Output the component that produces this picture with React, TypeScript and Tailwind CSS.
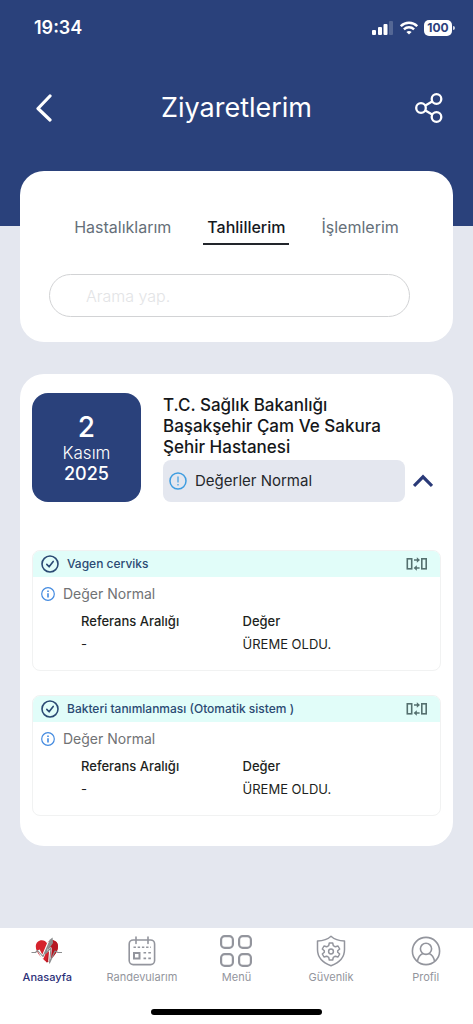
import type { ReactNode } from "react";

const results = [
  { name: "Vagen cerviks", status: "Değer Normal", range: "-", value: "ÜREME OLDU." },
  {
    name: "Bakteri tanımlanması (Otomatik sistem )",
    status: "Değer Normal",
    range: "-",
    value: "ÜREME OLDU.",
  },
];

const tabs = ["Hastalıklarım", "Tahlillerim", "İşlemlerim"];

function StatusBar() {
  return (
    <div className="flex h-14 items-center justify-between pr-[18px] pl-[34px]">
      <span className="text-lg font-semibold">19:34</span>
      <div className="flex items-center gap-1.5">
        <svg width="22" height="14" viewBox="0 0 22 14" fill="currentColor">
          <rect x="0" y="9" width="4" height="5" rx="1" />
          <rect x="6" y="6" width="4" height="8" rx="1" />
          <rect x="11.5" y="3" width="4" height="11" rx="1" />
          <rect x="17" y="0" width="4" height="14" rx="1" opacity="0.2" />
        </svg>
        <svg width="18" height="14" viewBox="0 0 18 14" fill="none" stroke="currentColor" strokeWidth="2.4">
          <path d="M0.8 5.2C5.4 0.6 12.6 0.6 17.2 5.2" />
          <path d="M3.9 8.4C6.8 5.6 11.2 5.6 14.1 8.4" />
          <path d="M9 13.6L6.4 11C7.8 9.7 10.2 9.7 11.6 11Z" fill="currentColor" stroke="none" />
        </svg>
        <div className="flex items-center gap-px">
          <span className="flex h-4 w-7 items-center justify-center rounded-[5px] bg-white text-xs font-bold text-[#2a417b]">
            100
          </span>
          <span className="h-1 w-0.5 rounded-r-full bg-white/80" />
        </div>
      </div>
    </div>
  );
}

function Header() {
  return (
    <header className="h-[226px] bg-[#2a417b] text-white">
      <StatusBar />
      <div className="flex h-[104px] items-center justify-between px-7">
        <button type="button" aria-label="Geri" className="flex size-8 items-center justify-center">
          <svg width="18" height="28" viewBox="0 0 18 28" fill="none" stroke="currentColor" strokeWidth="3.2" strokeLinecap="round" strokeLinejoin="round">
            <path d="M15 2L3 14.5L15 26" />
          </svg>
        </button>
        <h1 className="text-[27px]">Ziyaretlerim</h1>
        <button type="button" aria-label="Paylaş" className="flex size-8 items-center justify-center">
          <svg width="28" height="30" viewBox="0 0 28 30" fill="none" stroke="currentColor" strokeWidth="2.3">
            <circle cx="6" cy="15" r="4.8" />
            <circle cx="21.5" cy="6" r="4.8" />
            <circle cx="21.5" cy="24" r="4.8" />
            <path d="M10 12.7L17.5 8.3M10 17.3L17.5 21.7" />
          </svg>
        </button>
      </div>
    </header>
  );
}

function SearchCard() {
  return (
    <section className="-mt-[55px] rounded-3xl bg-white px-[29px] pt-10 pb-[25px]">
      <nav className="flex justify-center gap-7">
        {tabs.map((tab) => (
          <button
            key={tab}
            type="button"
            className={
              tab === "Tahlillerim"
                ? "h-[34px] border-b-2 border-[#22252b] px-1 text-base font-medium text-[#15181d]"
                : "h-[34px] border-b-2 border-transparent px-1 text-base text-[#656f79]"
            }
          >
            {tab}
          </button>
        ))}
      </nav>
      <input
        type="search"
        aria-label="Arama yap"
        placeholder="Arama yap."
        className="mt-[29px] block h-[43px] w-[calc(100%-14px)] rounded-full border border-[#d2d3d5] px-9 text-base font-light placeholder:text-[#e3e4e6]"
      />
    </section>
  );
}

function CompareIcon() {
  return (
    <svg width="22" height="14" viewBox="0 0 22 14" fill="none" stroke="#55706f" strokeWidth="1.6">
      <rect x="1.3" y="1.8" width="4.4" height="10" />
      <rect x="15.8" y="1.8" width="4.4" height="10" />
      <path d="M8 3H11.5" />
      <path d="M10.8 0.2L14 3L10.8 5.8Z" fill="#55706f" stroke="none" />
      <path d="M13.6 11H10" />
      <path d="M10.8 8.2L7.6 11L10.8 13.8Z" fill="#55706f" stroke="none" />
    </svg>
  );
}

function ResultItem({ name, status, range, value }: (typeof results)[number]) {
  return (
    <article className="h-[121px] overflow-hidden rounded-lg border border-[#f1f2f2]">
      <div className="flex h-[26px] items-center bg-[#e1fdf9] pr-3 pl-2 text-[#2b4a73]">
        <svg width="18" height="18" viewBox="0 0 18 18" fill="none" stroke="currentColor" strokeWidth="1.6" strokeLinecap="round" strokeLinejoin="round">
          <circle cx="9" cy="9" r="8" />
          <path d="M5.8 9.4L8.1 11.8L12.2 6.4" />
        </svg>
        <h3 className="ml-2 flex-1 text-xs font-medium">{name}</h3>
        <button type="button" aria-label="Karşılaştır">
          <CompareIcon />
        </button>
      </div>
      <div className="mt-[5px] flex h-6 items-center gap-2 pl-2 text-sm text-[#707274]">
        <svg width="14" height="14" viewBox="0 0 14 14" fill="none" stroke="#438ae0" strokeWidth="1.2">
          <circle cx="7" cy="7" r="6.3" />
          <path d="M7 6.2V10.4M7 3.4V4.9" strokeWidth="1.6" />
        </svg>
        {status}
      </div>
      <table className="ml-12 w-[calc(100%-48px)] table-fixed text-left text-[13px] leading-4 text-[#1d1f21]">
        <thead>
          <tr className="h-[30px]">
            <th className="w-[45%] font-medium">Referans Aralığı</th>
            <th className="font-medium">Değer</th>
          </tr>
        </thead>
        <tbody>
          <tr>
            <td>{range}</td>
            <td>{value}</td>
          </tr>
        </tbody>
      </table>
    </article>
  );
}

function VisitCard() {
  return (
    <section className="mt-8 rounded-3xl bg-white px-3 pt-[19px] pb-[30px]">
      <div className="flex items-start gap-[22px]">
        <time
          dateTime="2025-11-02"
          className="flex size-[109px] shrink-0 flex-col items-center justify-center rounded-2xl bg-[#2a417b] text-white"
        >
          <span className="text-[28px] leading-8 font-medium">2</span>
          <span className="text-[17px] leading-5 font-light">Kasım</span>
          <span className="text-lg leading-[22px] font-medium">2025</span>
        </time>
        <div className="flex-1">
          <h2 className="pt-0.5 text-[17px] leading-[21px] font-medium text-[#15171a]">
            T.C. Sağlık Bakanlığı
            <br />
            Başakşehir Çam Ve Sakura
            <br />
            Şehir Hastanesi
          </h2>
          <div className="mt-0.5 flex items-center gap-2 pr-2">
            <div className="flex h-[42px] flex-1 items-center gap-2 rounded-lg bg-[#e4e7ef] pl-1.5 text-[15px] text-[#24272c]">
              <svg width="18" height="18" viewBox="0 0 18 18" fill="none" stroke="#3f9de0" strokeWidth="1.5">
                <circle cx="9" cy="9" r="8" />
                <path d="M9 4.6V10.4M9 12V13.4" strokeWidth="1.2" />
              </svg>
              Değerler Normal
            </div>
            <button type="button" aria-label="Kapat" className="text-[#2a3a78]">
              <svg width="20" height="14" viewBox="0 0 20 14" fill="none" stroke="currentColor" strokeWidth="3.2">
                <path d="M1 12L10 2.8L19 12" />
              </svg>
            </button>
          </div>
        </div>
      </div>
      <div className="mt-12 flex flex-col gap-6">
        {results.map((result) => (
          <ResultItem key={result.name} {...result} />
        ))}
      </div>
    </section>
  );
}

function HeartIcon() {
  return (
    <svg width="32" height="28" viewBox="0 0 32 28" fill="none">
      <path d="M16 25.5C10.5 21 4.8 15.5 4.8 9.6C4.8 5.6 7.6 3.2 10.8 3.2C13.2 3.2 14.8 4.4 16 6.2C17.2 4.4 18.8 3.2 21.2 3.2C24.4 3.2 27 5.6 27 9.6C27 15.5 21.5 21 16 25.5Z" fill="#d5232d" />
      <path d="M27 9.6C27 15.5 21.5 21 16 25.5L15.2 24.8L20.5 3.3C24.3 3.2 27 5.4 27 9.6Z" fill="#b51722" />
      <path d="M7.5 13L11.5 20.5L17.5 6L14.5 15L19.5 11.5L18.5 24" stroke="#fff" strokeWidth="2.6" strokeLinejoin="round" />
      <path d="M0.5 15.5H4.5L6.5 13.5L12 19.5L18.5 5L14.5 16.5L20 11L18.5 26L24 14L27 15.5H31" stroke="#8b8d8e" strokeWidth="1.1" strokeLinejoin="round" />
      <path d="M18.4 3L21.6 0.6L22 6L16.5 14Z" fill="#8b8d8e" />
    </svg>
  );
}

function CalendarIcon() {
  return (
    <svg width="28" height="30" viewBox="0 0 28 30" fill="none" stroke="currentColor" strokeWidth="1.6">
      <rect x="1.2" y="4" width="25.4" height="24.6" rx="4" />
      <path d="M8 1V7.5M20 1V7.5" strokeLinecap="round" />
      <path d="M5.5 11.2H23" strokeDasharray="2.4 1.8" />
      <rect x="6" y="17" width="5.5" height="5.5" strokeWidth="2" />
      <path d="M15.5 16.8H23M15.5 22.4H23" strokeDasharray="2.6 2.2" />
    </svg>
  );
}

function MenuIcon() {
  return (
    <svg width="34" height="34" viewBox="0 0 34 34" fill="none" stroke="currentColor" strokeWidth="2.2">
      <rect x="2.1" y="2.1" width="11.8" height="11.8" rx="3.6" />
      <rect x="20.1" y="2.1" width="11.8" height="11.8" rx="3.6" />
      <rect x="2.1" y="20.1" width="11.8" height="11.8" rx="3.6" />
      <rect x="20.1" y="20.1" width="11.8" height="11.8" rx="3.6" />
    </svg>
  );
}

function ShieldIcon() {
  return (
    <svg width="30" height="32" viewBox="0 0 30 32" fill="none" stroke="currentColor" strokeWidth="1.5" strokeLinejoin="round">
      <path d="M15 1.2C11.5 4.5 6.5 5.8 1.5 6V14.5C1.5 22.5 7.5 28 15 30.8C22.5 28 28.5 22.5 28.5 14.5V6C23.5 5.8 18.5 4.5 15 1.2Z" />
      <path d="M13.3 8H16.7L17.3 10.7L19.3 11.8L22 11L23.7 14L21.7 15.8V17.2L23.7 19L22 22L19.3 21.2L17.3 22.3L16.7 25H13.3L12.7 22.3L10.7 21.2L8 22L6.3 19L8.3 17.2V15.8L6.3 14L8 11L10.7 11.8L12.7 10.7Z" />
      <circle cx="15" cy="16.5" r="2.4" />
    </svg>
  );
}

function ProfileIcon() {
  return (
    <svg width="30" height="30" viewBox="0 0 30 30" fill="none" stroke="currentColor" strokeWidth="1.6">
      <circle cx="15" cy="15" r="13.6" />
      <circle cx="15" cy="12.8" r="5.6" />
      <path d="M6.4 25.4C7.2 21.3 9.4 18.6 12 17.6M23.6 25.4C22.8 21.3 20.6 18.6 18 17.6" />
    </svg>
  );
}

function NavItem({ label, active, children }: { label: string; active?: boolean; children: ReactNode }) {
  return (
    <a
      href="#"
      className={
        active
          ? "flex flex-col items-center text-[11px] font-medium text-[#2b2f78]"
          : "flex flex-col items-center text-[11px] text-[#93959d]"
      }
    >
      <span className="flex h-9 items-center">{children}</span>
      <span className="leading-4">{label}</span>
    </a>
  );
}

export default function App() {
  return (
    <div className="flex min-h-screen flex-col bg-[#e4e7ef] font-['Inter',sans-serif]">
      <Header />
      <main className="flex-1 px-5 pb-6">
        <SearchCard />
        <VisitCard />
      </main>
      <footer className="sticky bottom-0 bg-white pt-[5px]">
        <nav className="grid grid-cols-5">
          <NavItem label="Anasayfa" active>
            <HeartIcon />
          </NavItem>
          <NavItem label="Randevularım">
            <CalendarIcon />
          </NavItem>
          <NavItem label="Menü">
            <MenuIcon />
          </NavItem>
          <NavItem label="Güvenlik">
            <ShieldIcon />
          </NavItem>
          <NavItem label="Profil">
            <ProfileIcon />
          </NavItem>
        </nav>
        <div className="mx-auto mt-6 mb-[9px] h-1.5 w-[36%] rounded-full bg-black" />
      </footer>
    </div>
  );
}
